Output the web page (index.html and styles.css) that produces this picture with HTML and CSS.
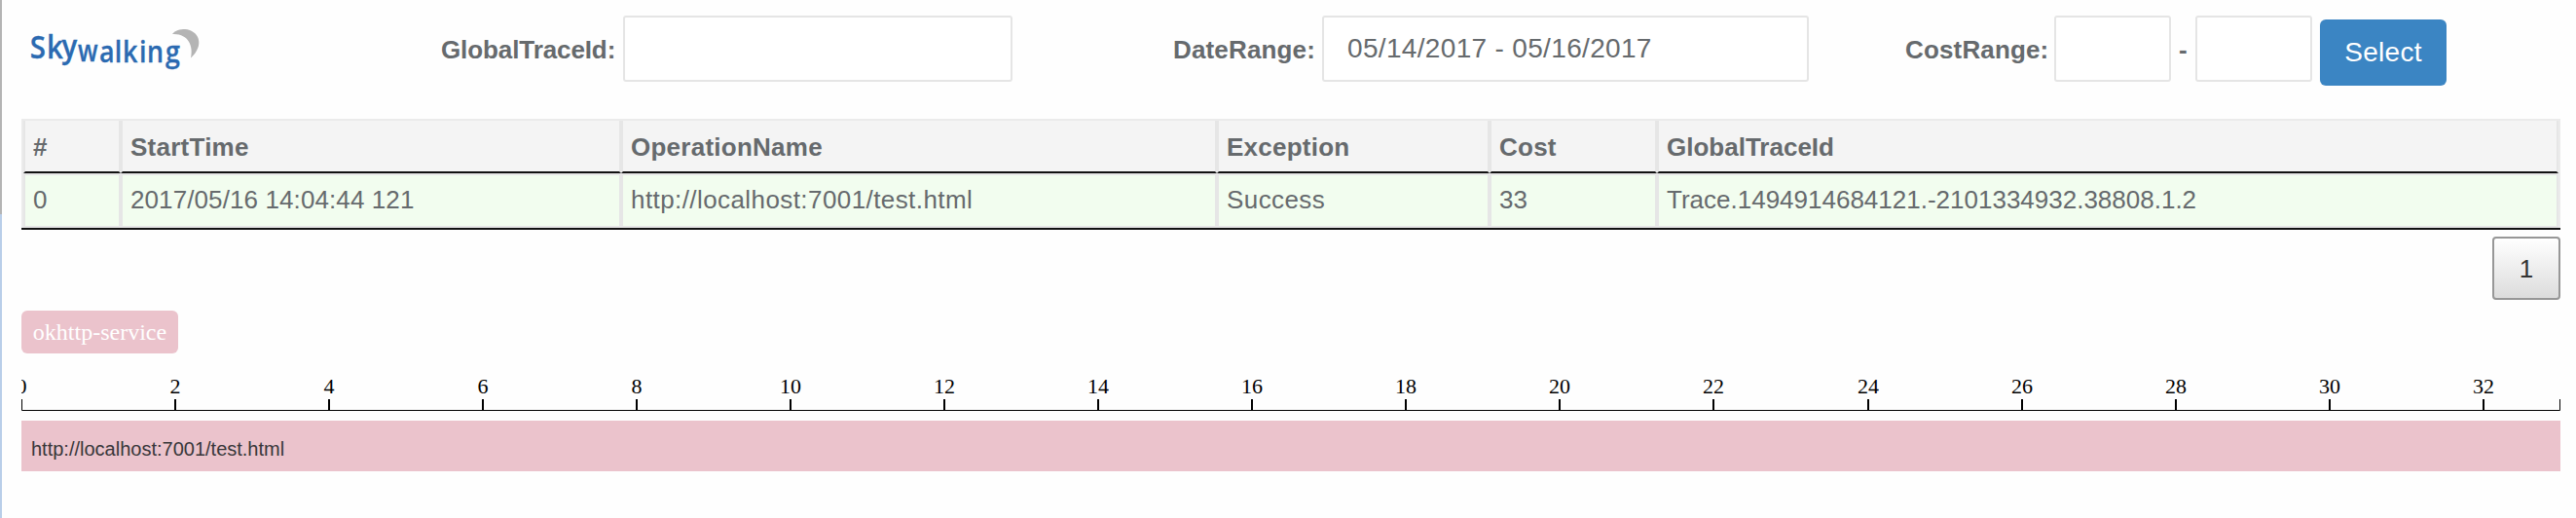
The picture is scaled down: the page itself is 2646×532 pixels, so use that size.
FILE: index.html
```html
<!DOCTYPE html>
<html lang="en">
<head>
<meta charset="utf-8">
<title>Skywalking</title>
<link rel="stylesheet" href="styles.css">
</head>
<body>
<div class="edge"><div class="edge-top"></div></div>
<main class="page">
  <header class="toolbar">
    <svg class="logo" width="190" height="48" viewBox="0 0 190 48">
      <g class="logo-text">
        <text transform="scale(.92 1)" font-size="32" y="32 32 31" x="9.5 28.2 45">Sky</text>
        <text transform="scale(.84 1)" font-size="30" y="35" x="69">w</text>
        <text transform="scale(.88 1)" font-size="30.5" y="36" x="91 108.8 118.2 137.400 146.5 168.2">alking</text>
      </g>
      <path d="M155 7C158 3 163 2 168 2C182 3 189 18 174 31.500C177 19 171 6 155 7Z" fill="#b4b4b4"/>
    </svg>
    <div class="field field-trace"><label class="tight">GlobalTraceId:</label><input class="input-trace" type="text"></div>
    <div class="field field-date"><label>DateRange:</label><input class="input-date" type="text" value="05/14/2017 - 05/16/2017"></div>
    <div class="field field-cost"><label>CostRange:</label><input class="input-cost" type="text"><span class="dash">-</span><input class="input-cost" type="text"></div>
    <button class="select">Select</button>
  </header>
  <div class="table-wrap">
    <table class="traces">
      <colgroup><col class="c-num"><col class="c-time"><col class="c-op"><col class="c-ex"><col class="c-cost"><col></colgroup>
      <thead><tr><th>#</th><th>StartTime</th><th>OperationName</th><th>Exception</th><th>Cost</th><th class="tight">GlobalTraceId</th></tr></thead>
      <tbody><tr><td>0</td><td class="loose-s">2017/05/16 14:04:44 121</td><td class="loose">http://localhost:7001/test.html</td><td class="loose">Success</td><td>33</td><td>Trace.1494914684121.-2101334932.38808.1.2</td></tr></tbody>
    </table>
  </div>
  <div class="pager"><button class="page-no">1</button></div>
  <div class="legend"><span class="tag">okhttp-service</span></div>
  <svg class="axis" width="2608" height="52" viewBox="0 0 2608 52">
    <path d="M.5 28V39.500H2607.500V28" fill="none" stroke="#000"/>
    <path d="M158 28v11M316 28v11M474 28v11M632 28v11M790 28v11M948 28v11M1106 28v11M1264 28v11M1422 28v11M1580 28v11M1738 28v11M1897 28v11M2055 28v11M2213 28v11M2371 28v11M2529 28v11" stroke="#000" stroke-width="2"/>
    <g class="ticks">
      <text x="0" y="22">0</text><text x="158" y="22">2</text><text x="316" y="22">4</text><text x="474" y="22">6</text><text x="632" y="22">8</text><text x="790" y="22">10</text><text x="948" y="22">12</text><text x="1106" y="22">14</text><text x="1264" y="22">16</text><text x="1422" y="22">18</text><text x="1580" y="22">20</text><text x="1738" y="22">22</text><text x="1897" y="22">24</text><text x="2055" y="22">26</text><text x="2213" y="22">28</text><text x="2371" y="22">30</text><text x="2529" y="22">32</text>
    </g>
  </svg>
  <div class="span-bar">http://localhost:7001/test.html</div>
</main>
</body>
</html>
```
FILE: styles.css
```css
* { box-sizing: border-box; }
body {
  margin: 0;
  height: 532px;
  display: flex;
  overflow: hidden;
  background: #fefefe;
  color: #666a6d;
  font: 26px/30px "Liberation Sans", Arial, sans-serif;
}
.edge { width: 2px; background: #b9cee9; flex: none; }
.edge-top { height: 220px; background: #b4b4b4; }
.page { flex: none; width: 2608px; margin-left: 20px; }
.toolbar { display: flex; align-items: flex-start; height: 122px; padding-top: 16px; }
.logo { display: block; flex: none; width: 190px; margin-top: 12px; overflow: visible; }
.logo-text { font-family: "Open Sans", sans-serif; font-weight: 600; fill: #2b6ab1; stroke: #2b6ab1; stroke-width: .3px; }
.field { display: flex; align-items: center; height: 68px; flex: none; }
label, .dash { flex: none; font-weight: bold; letter-spacing: .15px; line-height: 30px; padding: 2px 0 0 1px; }
.field-trace { margin-left: 240px; }
.field-trace label { width: 188px; }
.field-date { margin-left: 164px; }
.field-date label { width: 154px; }
.field-cost { margin-left: 98px; }
.field-cost label { width: 154px; }
.field input {
  flex: none;
  height: 68px;
  padding: 0 24px;
  border: 2px solid #e5e5e5;
  border-radius: 3px;
  background: #fff;
  color: #666a6d;
  font: 28px/34px "Liberation Sans", Arial, sans-serif;
  letter-spacing: .33px;
}
.input-trace { width: 400px; }
.input-date { width: 500px; }
.field .input-cost { width: 120px; }
.field .dash { width: 25px; padding-left: 0; text-align: center; }
label.tight { letter-spacing: -.1px; }
th.tight { letter-spacing: 0; }
.select {
  width: 130px;
  height: 68px;
  margin: 4px 0 0 8px;
  padding: 0;
  border: 0;
  border-radius: 6px;
  background: #3b85c3;
  color: #fff;
  font: 28px/34px "Liberation Sans", Arial, sans-serif;
  letter-spacing: .3px;
}
.table-wrap { border-bottom: 2px solid #111; }
.traces {
  width: 2608px;
  table-layout: fixed;
  border-collapse: separate;
  border-spacing: 0;
  border: 2px solid #ebebeb;
  border-bottom: 0;
}
.c-num { width: 100px; }
.c-time { width: 514px; }
.c-op { width: 612px; }
.c-ex { width: 280px; }
.c-cost { width: 172px; }
th, td { text-align: left; border: 2px solid #e6e6e6; padding: 0 8px; line-height: 30px; }
th { height: 54px; border-top: 0; border-bottom-color: #111; background: #f4f4f4; letter-spacing: .25px; padding-top: 2px; }
td { height: 56px; background: #f2fdef; padding-bottom: 2px; }
.loose { letter-spacing: .42px; }
.loose-s { letter-spacing: .1px; }
.pager { display: flex; justify-content: flex-end; padding-top: 7px; height: 83px; }
.page-no {
  width: 70px;
  height: 65px;
  padding: 0;
  border: 2px solid #979797;
  border-radius: 4px;
  background: linear-gradient(#fff, #dcdcdc);
  color: #333;
  font: 26px/30px "Liberation Sans", Arial, sans-serif;
}
.legend { display: flex; height: 61px; }
.tag {
  width: 161px;
  height: 44px;
  border-radius: 6px;
  background: #ebc3cc;
  color: #fff;
  text-align: center;
  font: 24px/44px "Liberation Serif", "Times New Roman", serif;
}
.axis { display: block; margin-top: 2px; }
.ticks { font: 22px "Liberation Serif", "Times New Roman", serif; fill: #000; text-anchor: middle; }
.span-bar {
  height: 52px;
  margin-top: -2px;
  padding-left: 10px;
  background: #ebc3cc;
  color: #38373a;
  font: 20px/58px "Liberation Sans", Arial, sans-serif;
}
```
